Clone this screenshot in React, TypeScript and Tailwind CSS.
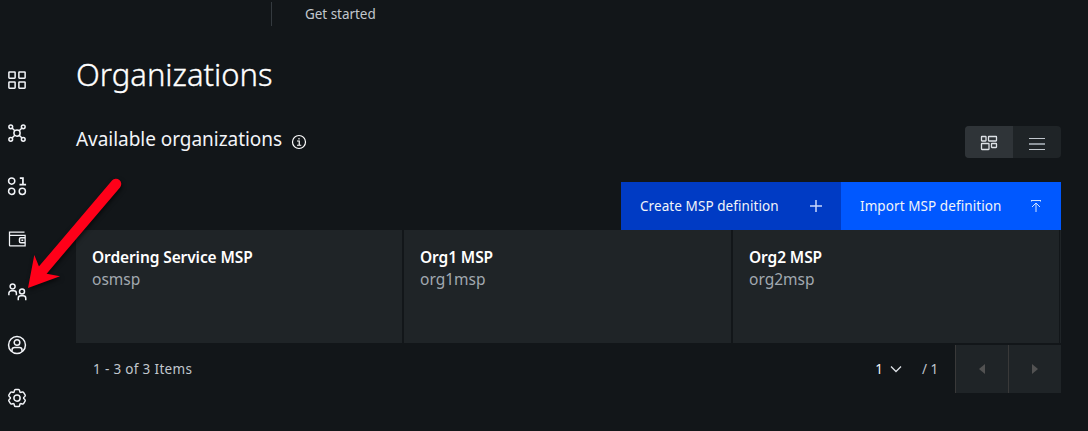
import React from "react";

type IconProps = { size?: number; className?: string; children: React.ReactNode };

const Icon = ({ size = 20, className = "", children }: IconProps) => (
  <svg width={size} height={size} viewBox="0 0 32 32" fill="none" stroke="currentColor" strokeWidth="2.4" className={"block shrink-0 " + className}>
    {children}
  </svg>
);

const DashboardIcon = () => (
  <Icon>
    <rect x="3" y="3" width="10" height="10" rx="1" />
    <rect x="19" y="3" width="10" height="10" rx="1" />
    <rect x="3" y="19" width="10" height="10" rx="1" />
    <rect x="19" y="19" width="10" height="10" rx="1" />
  </Icon>
);

const NodesIcon = () => (
  <Icon>
    <circle cx="16" cy="16" r="5" />
    <circle cx="6" cy="6" r="3" />
    <circle cx="26" cy="6" r="3" />
    <circle cx="6" cy="26" r="3" />
    <circle cx="26" cy="26" r="3" />
    <path d="M8 8l4.5 4.5M24 8l-4.5 4.5M8 24l4.5-4.5M24 24l-4.5-4.5" />
  </Icon>
);

const ChannelsIcon = () => (
  <Icon>
    <circle cx="7.5" cy="8" r="5" />
    <circle cx="7.5" cy="24.5" r="5" />
    <circle cx="24.5" cy="24.5" r="5" />
    <path d="M20.5 3.2h5V13.600M20 13.600h10.500" strokeWidth="2.800" />
  </Icon>
);

const WalletIcon = () => (
  <Icon>
    <path d="M28 5H4v21a1 1 0 0 0 1 1h24V10H4" strokeWidth="2" />
    <path d="M29 14h-7a2 2 0 0 0-2 2v4a2 2 0 0 0 2 2h7" />
    <path d="M23 18h3" />
  </Icon>
);

const PeopleIcon = () => (
  <Icon>
    <circle cx="9" cy="7" r="4" />
    <path d="M3 21v-3a4 4 0 0 1 4-4h4a4 4 0 0 1 4 4v3" />
    <circle cx="24" cy="15" r="4" />
    <path d="M18 29v-3a4 4 0 0 1 4-4h4a4 4 0 0 1 4 4v3" />
  </Icon>
);

const UserIcon = () => (
  <Icon>
    <circle cx="16" cy="16" r="13.5" />
    <circle cx="16" cy="12" r="4.5" />
    <path d="M8 26.5V24a4 4 0 0 1 4-4h8a4 4 0 0 1 4 4v2.5" />
  </Icon>
);

const SettingsIcon = () => (
  <Icon>
    <circle cx="16" cy="16" r="5" />
    <path d="M27 16.76c0-.25 0-.5 0-.76s0-.51 0-.77l1.92-1.68A2 2 0 0 0 29.3 11L26.94 7a2 2 0 0 0-1.73-1 2 2 0 0 0-.64.1l-2.43.82a11.35 11.35 0 0 0-1.31-.75l-.51-2.52a2 2 0 0 0-2-1.61H13.64a2 2 0 0 0-2 1.61l-.51 2.52a11.48 11.48 0 0 0-1.32.75L7.43 6.06A2 2 0 0 0 6.79 6 2 2 0 0 0 5.06 7L2.7 11a2 2 0 0 0 .41 2.51L5 15.24c0 .25 0 .5 0 .76s0 .51 0 .77L3.11 18.45A2 2 0 0 0 2.7 21L5.06 25a2 2 0 0 0 1.73 1 2 2 0 0 0 .64-.1l2.43-.82a11.35 11.35 0 0 0 1.31.75l.51 2.52a2 2 0 0 0 2 1.61h4.72a2 2 0 0 0 2-1.61l.51-2.52a11.48 11.48 0 0 0 1.32-.75l2.42.82a2 2 0 0 0 .64.1 2 2 0 0 0 1.73-1L29.3 21a2 2 0 0 0-.41-2.51z" transform="translate(.5 .5) scale(.97)" />
  </Icon>
);

const navIcons = [DashboardIcon, NodesIcon, ChannelsIcon, WalletIcon, PeopleIcon, UserIcon, SettingsIcon];

const organizations = [
  { name: "Ordering Service MSP", id: "osmsp" },
  { name: "Org1 MSP", id: "org1msp" },
  { name: "Org2 MSP", id: "org2msp" },
];

export default function App() {
  return (
    <div className="relative flex h-[431px] w-[1088px] flex-col overflow-hidden bg-[#121619] font-['Noto_Sans',sans-serif] text-white">
      <header className="flex h-7 shrink-0 pl-[271px]">
        <div className="mt-0.5 h-6 w-px bg-[#343a3f]" />
        <a className="ml-[33px] mt-[3px] text-[13.5px] leading-[22px] tracking-[-0.04px] text-[#c1c7cd]">Get started</a>
      </header>
      <div className="flex min-h-0 grow">
        <nav className="flex w-[76px] shrink-0 flex-col gap-[33px] pl-[7px] pt-[42px] text-[#f2f4f8]">
          {navIcons.map((NavIcon, i) => (
            <NavIcon key={i} />
          ))}
        </nav>
        <main className="flex w-[985px] flex-col">
          <h1 className="mt-[26px] h-10 text-[31px] font-light leading-10 [-webkit-text-stroke:0.35px_white]">Organizations</h1>
          <div className="mt-8 flex h-8 items-center justify-between">
            <div className="flex items-center">
              <h2 className="-mt-[7px] w-[215px] whitespace-nowrap text-[19px] leading-7 tracking-[-0.04px] text-[#f2f4f8]">Available organizations</h2>
              <Icon size={16}>
                <circle cx="16" cy="16" r="13" />
                <path d="M12 14h4.5v8M12 22.5h8.5M16 8v3" />
              </Icon>
            </div>
            <div className="flex h-8 w-24 overflow-hidden rounded bg-[#1f2427]">
              <div className="flex w-12 items-center justify-center bg-[#2f3438]">
                <svg width="18" height="18" viewBox="0 0 18 18" fill="none" stroke="#dde1e6" strokeWidth="1.3">
                  <rect x="1.5" y="3.5" width="4.5" height="4.5" rx=".5" />
                  <rect x="8.5" y="3.5" width="8" height="4.5" rx=".5" />
                  <rect x="1.5" y="10.5" width="7.5" height="6" rx=".5" />
                  <rect x="11.5" y="10.5" width="5" height="4" rx=".5" />
                </svg>
              </div>
              <div className="flex w-12 flex-col items-center justify-center gap-1 pt-1">
                <div className="h-px w-4 bg-[#c1c7cd]" />
                <div className="h-0.5 w-4 bg-[#8d949b]" />
                <div className="h-px w-4 bg-[#c1c7cd]" />
              </div>
            </div>
          </div>
          <div className="mt-6 flex h-12 justify-end text-[13.5px] leading-5 tracking-[0.08px] text-[#f2f4f8]">
            <button className="flex w-[220px] items-center justify-between bg-[#003bc4] px-[19px]">
              <span>Create MSP definition</span>
              <svg width="12" height="12" viewBox="0 0 12 12" fill="none" stroke="#c9d8fb" strokeWidth="1.5"><path d="M6 0v12M0 6h12" /></svg>
            </button>
            <button className="flex w-[220px] items-center justify-between bg-[#0058ff] pl-[19px] pr-5">
              <span>Import MSP definition</span>
              <svg width="10" height="12" viewBox="0 0 10 12" fill="none" stroke="#d0e2ff" strokeWidth="1"><path d="M0 2V.5h10V2M5 12V3M1 7l4-4 4 4" /></svg>
            </button>
          </div>
          <div className="grid h-[113px] grid-cols-[326px_327px_326px_1px] gap-x-0.5">
            {organizations.map((org) => (
              <article key={org.id} className="bg-[#1f2427] pl-4 pt-4">
                <h3 className="text-[15.5px] font-semibold leading-[22px] tracking-[-0.1px]">{org.name}</h3>
                <p className="text-[15.5px] leading-[22px] tracking-[0.02px] text-[#a2a9b0]">{org.id}</p>
              </article>
            ))}
            <div className="-ml-px w-px bg-[#1f2427]" />
          </div>
          <footer className="mt-0.5 flex h-12 items-center text-[13.5px] text-[#c1c7cd]">
            <span className="ml-[17px] tracking-[0.33px]">1 - 3 of 3 Items</span>
            <span className="ml-auto text-[#f2f4f8]">1</span>
            <svg className="ml-[7px]" width="12" height="8" viewBox="0 0 12 8" fill="none" stroke="#dde1e6" strokeWidth="1.3"><path d="M1 1.5l5 5 5-5" /></svg>
            <span className="ml-5 w-[33px]">/ 1</span>
            <button className="flex h-12 w-[53px] items-center justify-center border-l border-[#393939] bg-[#1f2427]">
              <svg width="6" height="10" viewBox="0 0 6 10" fill="#525252"><path d="M6 0v10L0 5z" /></svg>
            </button>
            <button className="flex h-12 w-[53px] items-center justify-center border-l border-[#393939] bg-[#1f2427]">
              <svg width="6" height="10" viewBox="0 0 6 10" fill="#525252"><path d="M0 0v10l6-5z" /></svg>
            </button>
          </footer>
        </main>
      </div>
      <svg className="pointer-events-none absolute left-0 top-0 drop-shadow-[1px_2px_2px_rgba(0,0,0,0.6)]" width="140" height="310" viewBox="0 0 140 310">
        <path d="M116 184L42 271" stroke="#ff0019" strokeWidth="10.5" strokeLinecap="round" />
        <path d="M28 288L34.3 255 39 266.5l7.7 7.2L60 276.3z" fill="#ff0019" />
      </svg>
    </div>
  );
}
